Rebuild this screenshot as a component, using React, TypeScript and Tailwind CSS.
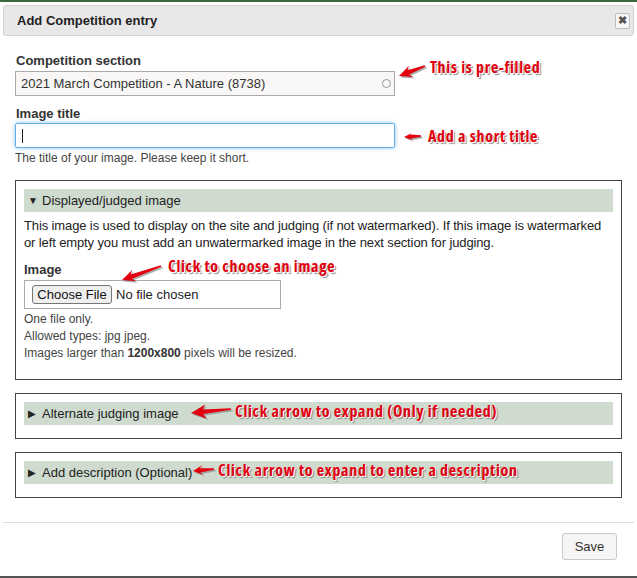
import React from "react";

const note =
  "absolute whitespace-nowrap font-['Open_Sans',sans-serif] font-bold text-[16px] leading-[20px] tracking-[0.7px] text-[#e2000f] [font-stretch:75%] [text-shadow:1px_1px_0_#fff,2px_2px_1px_#8a8a8a]";

function Arrow({ tip, tail, head = 13, wide = 6 }: { tip: [number, number]; tail: [number, number]; head?: number; wide?: number }) {
  const dx = tail[0] - tip[0];
  const dy = tail[1] - tip[1];
  const len = Math.sqrt(dx * dx + dy * dy);
  const ang = (Math.atan2(dy, dx) * 180) / Math.PI;
  const d = `M0,0 L${head},${-wide} L${head - 3},-2.2 L${len},-0.7 L${len},0.7 L${head - 3},2.2 L${head},${wide} Z`;
  return (
    <g>
      <path d={d} fill="#8a8a8a" opacity="0.7" transform={`translate(${tip[0] + 1.5},${tip[1] + 1.5}) rotate(${ang})`} />
      <path d={d} fill="#e2000f" transform={`translate(${tip[0]},${tip[1]}) rotate(${ang})`} />
    </g>
  );
}

function Section({ open, title, children }: { open?: boolean; title: string; children?: React.ReactNode }) {
  return (
    <div className={`border border-[#444] px-[8px] pt-[8px] ${open ? "pb-[17px]" : "pb-[13px]"}`}>
      <div className="h-[23px] bg-[#cfdbcf] flex items-center pl-[4px] text-[13px] text-[#222]">
        <span className="text-[10px] w-[14px]">{open ? "▼" : "▶"}</span>
        <span>{title}</span>
      </div>
      {children}
    </div>
  );
}

export default function App() {
  return (
    <div className="relative w-[637px] h-[578px] bg-white overflow-hidden font-['Liberation_Sans',Arial,sans-serif] text-[#333]">
      <div className="h-[2px] bg-[#3b6a3b]" />
      <div className="mx-[3px] mt-[3px] h-[31px] flex items-center justify-between bg-[#e8e8e8] border border-[#d3d3d3] rounded-[3px] pl-[13px] pr-[3px]">
        <h1 className="text-[13px] font-bold text-[#222]">Add Competition entry</h1>
        <div className="w-[15px] h-[16px] flex items-center justify-center border border-[#bdbdbd] rounded-[2px] bg-[#f6f6f6] text-[11px] font-bold leading-none text-[#555]">
          ✖
        </div>
      </div>

      <div className="px-[15px] pt-[17px]">
        <label className="block pl-px text-[13px] leading-[16px] font-bold text-[#333]">Competition section</label>
        <div className="mt-[2px] w-[380px] h-[25px] border border-[#aaa] bg-[#f8f7f5] flex items-center justify-between pl-[5px] pr-[3px] text-[13px] text-[#333]">
          <span>2021 March Competition - A Nature (8738)</span>
          <span className="w-[9px] h-[9px] rounded-full border border-[#999]" />
        </div>

        <label className="mt-[10px] block pl-px text-[13px] leading-[16px] font-bold text-[#333]">Image title</label>
        <div className="mt-[1px] w-[380px] h-[25px] border border-[#62aee9] rounded-[2px] shadow-[0_0_4px_rgba(82,168,236,0.7)] flex items-center pl-[6px]">
          <span className="w-px h-[14px] bg-[#222]" />
        </div>
        <p className="mt-[3px] text-[12px] leading-[15px] text-[#444]">The title of your image. Please keep it short.</p>

        <div className="mt-[14px]">
          <Section open title="Displayed/judged image">
            <p className="mt-[5px] text-[13px] leading-[17px] tracking-[-0.12px] text-[#222]">
              This image is used to display on the site and judging (if not watermarked). If this image is watermarked or left
              empty you must add an unwatermarked image in the next section for judging.
            </p>
            <div className="mt-[11px] text-[13px] leading-[16px] font-bold">Image</div>
            <div className="mt-[2px] w-[257px] h-[29px] border border-[#aaa] flex items-center pl-[7px] text-[13px] text-[#222]">
              <span className="h-[19px] w-[80px] flex items-center justify-center border border-[#767676] rounded-[3px] bg-[#efefef] text-[#111]">
                Choose File
              </span>
              <span className="ml-[4px]">No file chosen</span>
            </div>
            <div className="mt-[2px] text-[12px] leading-[17px] text-[#444]">
              <div>One file only.</div>
              <div>Allowed types: jpg jpeg.</div>
              <div>
                Images larger than <b className="text-[#333]">1200x800</b> pixels will be resized.
              </div>
            </div>
          </Section>
        </div>
        <div className="mt-[13px]">
          <Section title="Alternate judging image" />
        </div>
        <div className="mt-[13px]">
          <Section title="Add description (Optional)" />
        </div>
      </div>

      <div className="mx-[3px] mt-[24px] h-px bg-[#dcdcdc]" />
      <div className="flex justify-end pr-[20px] mt-[10px]">
        <button className="w-[55px] h-[27px] border border-[#c8c8c8] rounded-[3px] bg-[#f5f5f5] text-[13px] text-[#333]">Save</button>
      </div>
      <div className="mt-[16px] h-[2px] bg-[#555]" />

      <svg className="absolute left-0 top-0 pointer-events-none" width="637" height="578">
        <Arrow tip={[399, 76]} tail={[425, 66]} />
        <Arrow tip={[404, 137]} tail={[421, 136]} head={9} wide={4} />
        <Arrow tip={[122, 280]} tail={[161, 266]} />
        <Arrow tip={[191, 413]} tail={[231, 409]} head={15} wide={7} />
        <Arrow tip={[193, 471]} tail={[214, 469]} head={10} wide={5} />
      </svg>
      <div className={`${note} left-[430px] top-[57px]`}>This is pre-filled</div>
      <div className={`${note} left-[428px] top-[126px]`}>Add a short title</div>
      <div className={`${note} left-[168px] top-[256px]`}>Click to choose an image</div>
      <div className={`${note} left-[235px] top-[401px]`}>Click arrow to expand (Only if needed)</div>
      <div className={`${note} left-[218px] top-[460px]`}>Click arrow to expand to enter a description</div>
    </div>
  );
}
